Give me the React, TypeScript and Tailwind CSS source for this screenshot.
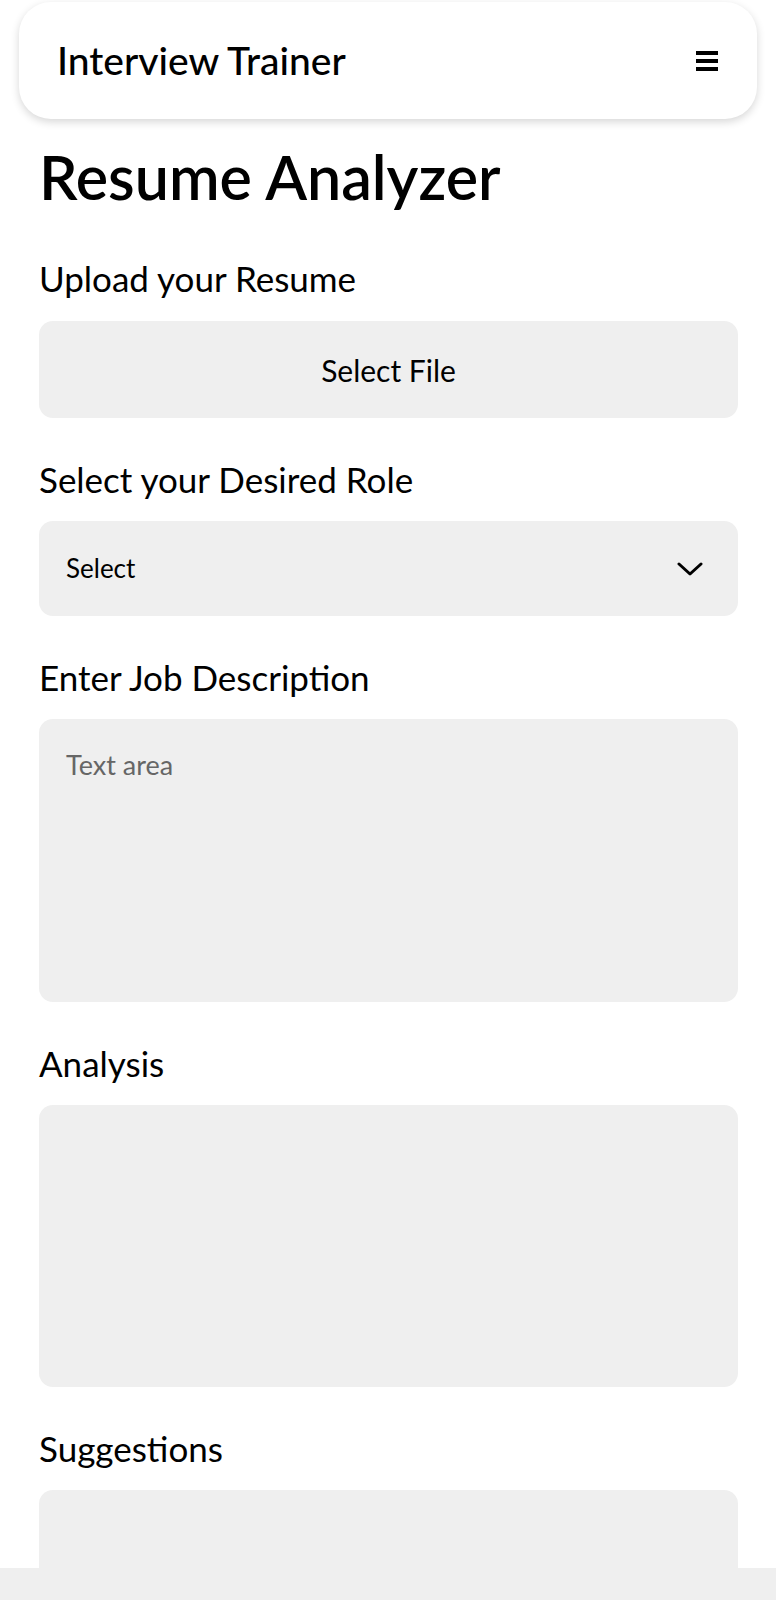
import { useState } from "react";

const ROLES = ["Software Engineer", "Data Analyst", "Product Manager", "Designer"];

function Field({ label, children }: { label: string; children: React.ReactNode }) {
  return (
    <section className="mt-[40px] flex flex-col">
      <h2 className="text-[35px] leading-[1.2] text-black">{label}</h2>
      <div className="mt-[21px]">{children}</div>
    </section>
  );
}

export default function App() {
  const [role, setRole] = useState("");

  return (
    <div className="min-h-screen bg-white font-['Lato',_'Noto_Sans',_sans-serif] text-black">
      {/* Top bar */}
      <header className="mx-[19px] mt-[2px] flex h-[117px] items-center justify-between rounded-[32px] bg-white pl-[38px] pr-[39px] shadow-[0_3px_8px_rgba(0,0,0,0.16)]">
        <span className="text-[39px] font-medium leading-[1.2]">Interview Trainer</span>
        <button className="flex w-[22px] flex-col gap-[4px]" aria-label="Menu">
          <span className="h-[4px] w-full bg-black" />
          <span className="h-[4px] w-full bg-black" />
          <span className="h-[4px] w-full bg-black" />
        </button>
      </header>

      <main className="pl-[39px] pr-[38px] pb-[40px]">
        <h1 className="mt-[21px] text-[61px] font-semibold leading-[1.2]">Resume Analyzer</h1>

        <section className="mt-[44px] flex flex-col">
          <h2 className="text-[35px] leading-[1.2]">Upload your Resume</h2>
          <button className="mt-[22px] flex h-[97px] items-center justify-center rounded-[14px] bg-[#efefef] text-[30px] leading-[1.2]">
            Select File
          </button>
        </section>

        <Field label="Select your Desired Role">
          <label className="relative flex h-[95px] items-center rounded-[14px] bg-[#efefef] pl-[27px] pr-[35px]">
            <select
              value={role}
              onChange={(e) => setRole(e.target.value)}
              className="h-full flex-1 appearance-none bg-transparent text-[26px] leading-[1.2] outline-none"
            >
              <option value="">Select</option>
              {ROLES.map((r) => (
                <option key={r} value={r}>
                  {r}
                </option>
              ))}
            </select>
            <svg width="26" height="14" viewBox="0 0 26 14" className="pointer-events-none shrink-0">
              <polyline points="2,2 13,12 24,2" fill="none" stroke="black" strokeWidth="3" strokeLinecap="round" strokeLinejoin="round" />
            </svg>
          </label>
        </Field>

        <Field label="Enter Job Description">
          <textarea
            placeholder="Text area"
            className="block h-[283px] w-full resize-none rounded-[14px] bg-[#efefef] px-[27px] pt-[30px] text-[27px] leading-[1.2] outline-none placeholder:text-[#666666]"
          />
        </Field>

        <Field label="Analysis">
          <div className="h-[282px] rounded-[14px] bg-[#efefef]" />
        </Field>

        <Field label="Suggestions">
          <div className="h-[282px] rounded-[14px] bg-[#efefef]" />
        </Field>
      </main>

      {/* system nav strip */}
      <div className="fixed inset-x-0 bottom-0 h-[32px] bg-[#efefef]" />
    </div>
  );
}
